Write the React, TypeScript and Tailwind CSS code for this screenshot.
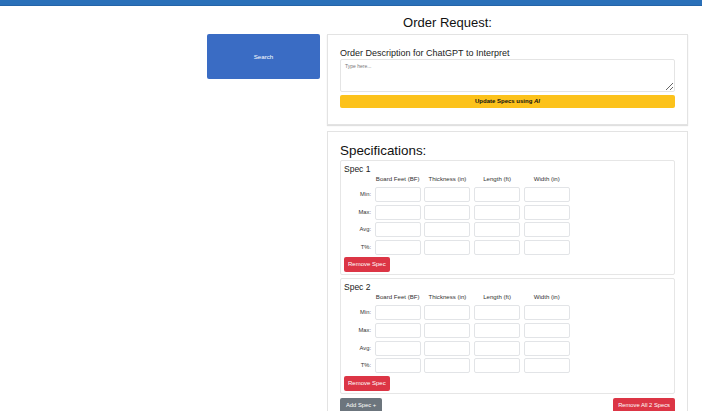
import React from 'react';

const fields = ['Board Feet (BF)', 'Thickness (in)', 'Length (ft)', 'Width (in)'];
const rows = ['Min:', 'Max:', 'Avg:', 'T%:'];

const SpecBox: React.FC<{ index: number }> = ({ index }) => (
  <div className="border border-[#e6e6e6] rounded-[2px] pt-[3px] pb-[2px] px-[3px]">
    <div className="text-[8.5px] leading-[10px] text-[#222]">Spec {index}</div>
    <div className="grid grid-cols-[27px_46px_46px_46px_46px] gap-x-[3.7px] gap-y-[2.6px] mt-[1px]">
      <div />
      {fields.map((f) => (
        <div key={f} className="text-center text-[6.1px] leading-[8px] text-[#333] mb-[1.5px]">
          {f}
        </div>
      ))}
      {rows.map((r) => (
        <React.Fragment key={r}>
          <div className="text-right text-[5.8px] leading-[15px] text-[#333]">{r}</div>
          {fields.map((f) => (
            <input
              key={f}
              className="block h-[15px] w-[46px] border border-[#e2e4e7] rounded-[2px] bg-white outline-none"
            />
          ))}
        </React.Fragment>
      ))}
    </div>
    <button className="block mt-[2.5px] h-[15px] px-[4px] rounded-[2px] bg-[#dc3545] text-white text-[6px] leading-[15px]">
      Remove Spec
    </button>
  </div>
);

export default function App() {
  return (
    <div className="w-[702px] h-[411px] overflow-hidden bg-white font-['Liberation_Sans',Arial,sans-serif]">
      {/* Nav bar strip */}
      <div className="h-[6px] bg-[#2a70b9] border-b border-[#2464a8]" />

      <div className="ml-[207px] w-[481px]">
        <h1 className="mt-[9px] mb-[3px] text-center text-[13px] leading-[16px] text-[#111]">Order Request:</h1>

        <div className="flex gap-[7px] items-start">
          {/* Left column */}
          <div className="w-[113px] shrink-0">
            <button className="block w-full h-[45px] rounded-[2px] bg-[#3a6cc4] text-white text-[6.2px]">Search</button>
          </div>

          {/* Right column */}
          <div className="flex-1 flex flex-col gap-[6px]">
            <div className="border border-[#e3e3e3] shadow-[0_1px_1px_rgba(0,0,0,0.12)] pt-[13px] pb-[16px] px-[12px]">
              <div className="text-[9px] leading-[10px] text-[#222]">Order Description for ChatGPT to Interpret</div>
              <textarea
                placeholder="Type here..."
                className="block w-full h-[33px] mt-[1px] border border-[#e4e4e4] rounded-[2px] px-[4px] py-[3px] text-[5px] leading-[6px] placeholder-[#777] outline-none"
              />
              <button className="block mt-[3px] w-full h-[13px] rounded-[2px] bg-[#fcc21b] text-[#111] text-[6px] font-bold leading-[13px]">
                Update Specs using <i>AI</i>
              </button>
            </div>

            <div className="border border-[#e3e3e3] pt-[11px] px-[12px] pb-[12px]">
              <div className="text-[13.4px] leading-[15px] text-[#111] mb-[2px]">Specifications:</div>
              <div className="flex flex-col gap-[3px]">
                <SpecBox index={1} />
                <SpecBox index={2} />
              </div>
              <div className="flex justify-between mt-[4px]">
                <button className="block h-[15px] px-[6px] rounded-[2px] bg-[#6c757d] text-white text-[5.8px] leading-[15px]">
                  Add Spec +
                </button>
                <button className="block h-[15px] px-[5px] rounded-[2px] bg-[#dc3545] text-white text-[5.8px] leading-[15px]">
                  Remove All 2 Specs
                </button>
              </div>
            </div>
          </div>
        </div>
      </div>
    </div>
  );
}
